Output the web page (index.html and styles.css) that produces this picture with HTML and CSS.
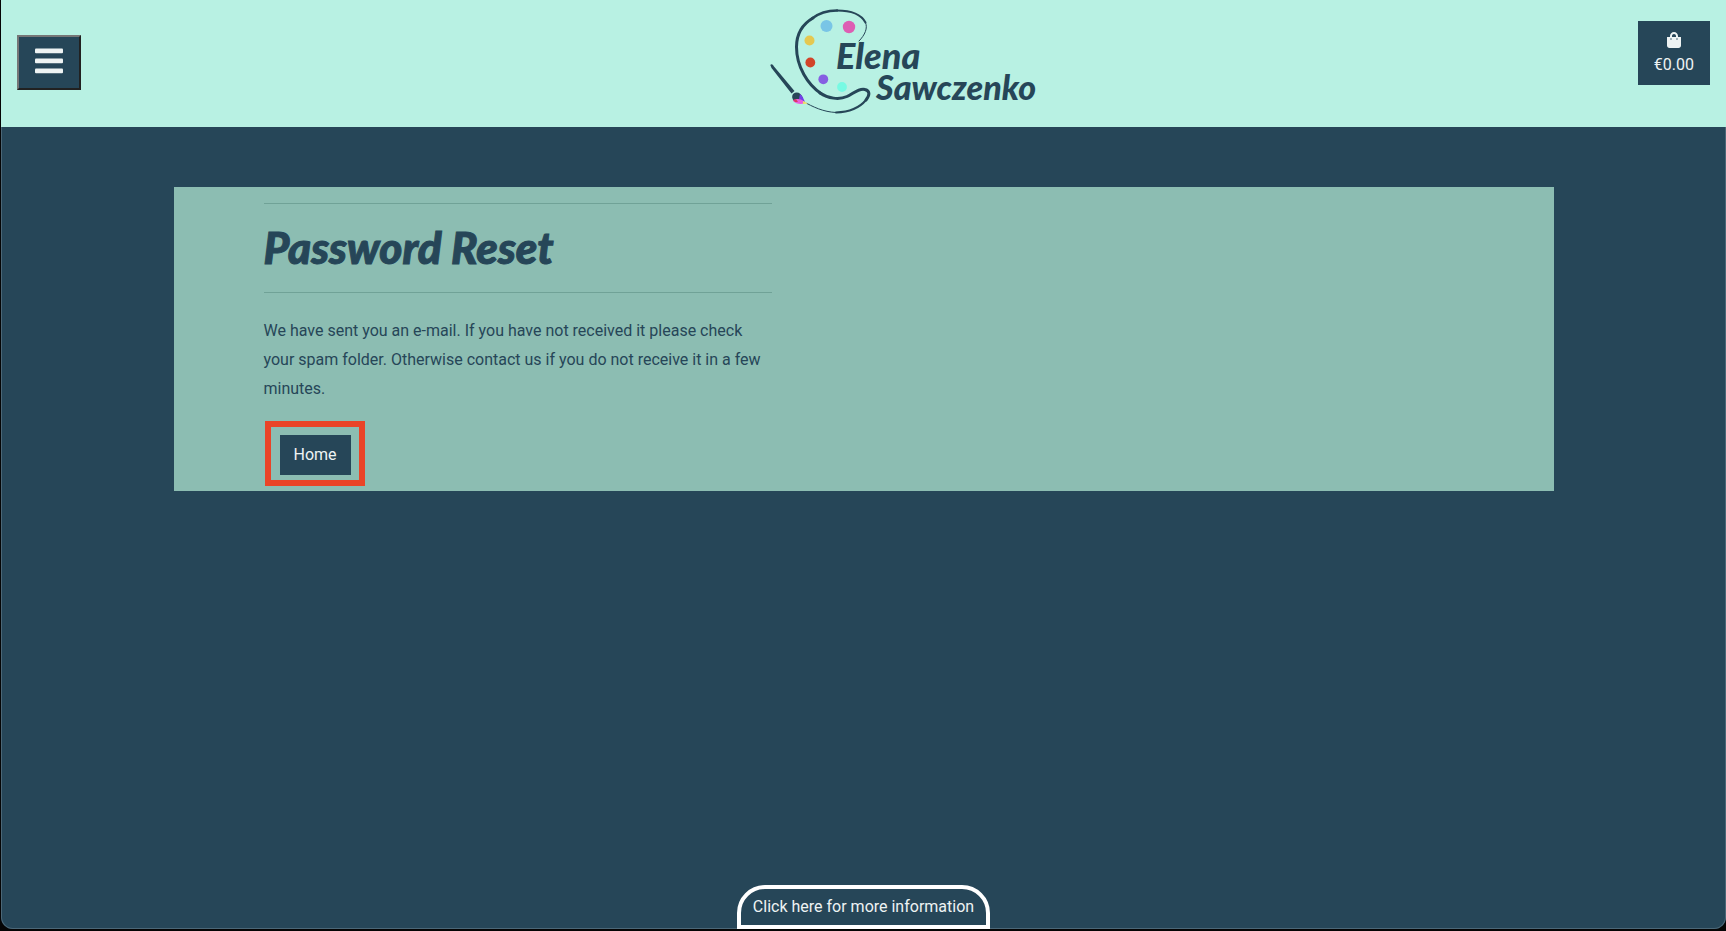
FILE: index.html
```html
<!DOCTYPE html>
<html lang="en">
<head>
<meta charset="utf-8">
<title>Password Reset - Elena Sawczenko</title>
<link rel="stylesheet" href="styles.css">
</head>
<body>
<div class="window">
  <header class="site-header">
    <button class="menu-button" type="button" aria-label="Menu">
      <svg class="menu-icon" viewBox="0 0 28 26" aria-hidden="true">
        <rect x="0" y="0.500" width="28" height="4.700" rx="1"/>
        <rect x="0" y="10.500" width="28" height="4.700" rx="1"/>
        <rect x="0" y="20.500" width="28" height="4.700" rx="1"/>
      </svg>
    </button>
    <a class="logo-link" href="#" aria-label="Elena Sawczenko">
      <svg class="logo" viewBox="-80 0 358 127">
        <path class="stroke thin" d="M99 41 C105 35 108 28 105.500 22.500"/>
        <path class="stroke light" d="M105.500 22.500 C101 14 90 10.500 77 10.500"/>
        <path class="stroke thick" d="M53 18 C41 25 36.500 35 36.500 47 C36.500 67 48 85 61 93.500"/>
        <path class="stroke medium" d="M77 10.500 C67 10.500 59 13 52 18.500"/>
        <path class="stroke thick" d="M60 93 C68 98.500 79 100 87 96.500 C93 94 99 87.500 105 89.500 C110 91 110 95 106 100"/>
        <path class="stroke light" d="M106 100 C101 106 91 112 76 112.500"/>
        <path class="stroke thin" d="M80 112.500 C68 113 57 109 47 103.500"/>
        <circle cx="66.500" cy="26" r="6" fill="#79c5e6"/>
        <circle cx="89" cy="27" r="6.200" fill="#dd5eb3"/>
        <circle cx="49.500" cy="40.500" r="5" fill="#e5c851"/>
        <circle cx="50.300" cy="62.500" r="4.900" fill="#d24429"/>
        <circle cx="63.300" cy="79.300" r="4.900" fill="#865fe2"/>
        <circle cx="82" cy="87" r="4.900" fill="#77fae3"/>
        <path class="handle" d="M10.300 65 C11.500 63.500 13 64.500 13.600 66 L34.500 91 L31.500 93.500 L11.500 68 Z"/>
        <path d="M33 94 C37 91 41 93 43 98 L38 101 L34 101 C32 99 31.500 96 33 94Z" fill="#264658"/>
        <path d="M40 94 C43 96 43.500 99 45 102 L39 99Z" fill="#713fe8"/>
        <path d="M33 101 C35 98.500 39 98.500 42 100 L45 103 C41 105 36 104 33 101Z" fill="#e85fdb"/>
        <path d="M33 100 L36 99 L38 102 L35 102Z" fill="#dd3865"/>
        <path d="M43 101 L48 103.500 L43 104Z" fill="#f1df5f"/>
        <text class="logo-text first" x="76" y="69">Elena</text>
        <text class="logo-text last" x="116" y="100">Sawczenko</text>
      </svg>
    </a>
    <a class="bag" href="#">
      <svg class="bag-icon" viewBox="0 0 448 512" aria-hidden="true">
        <path d="M352 160v-32C352 57.420 294.579 0 224 0S96 57.420 96 128v32H0v272c0 44.183 35.817 80 80 80h288c44.183 0 80-35.817 80-80V160h-96zm-192-32c0-35.290 28.710-64 64-64s64 28.710 64 64v32H160v-32zm160 120c-13.255 0-24-10.745-24-24s10.745-24 24-24 24 10.745 24 24-10.745 24-24 24zm-192 0c-13.255 0-24-10.745-24-24s10.745-24 24-24 24 10.745 24 24-10.745 24-24 24z"/>
      </svg>
      <span>€0.00</span>
    </a>
  </header>
  <main class="page">
    <section class="panel">
      <div class="message">
        <h1 class="title">Password Reset</h1>
        <p class="text">We have sent you an e-mail. If you have not received it please check your spam folder. Otherwise contact us if you do not receive it in a few minutes.</p>
        <div class="highlight"><a class="home" href="#">Home</a></div>
      </div>
    </section>
  </main>
  <button class="info-tab" type="button">Click here for more information</button>
</div>
</body>
</html>
```
FILE: styles.css
```css
* { box-sizing: border-box; }

body {
  margin: 0;
  padding: 0 0 2px 1px;
  min-height: 100vh;
  display: flex;
  background: #050505;
  color: #264658;
  font: 16px/24px Roboto, sans-serif;
}

.window {
  flex: 1;
  display: flex;
  flex-direction: column;
  background: #264658;
  border-radius: 0 0 12px 12px;
  box-shadow: inset 0 0 0 1px #4b6777;
  overflow: hidden;
}

.site-header {
  display: flex;
  justify-content: space-between;
  align-items: flex-start;
  padding: 0 16px;
  background: #b8f1e3;
}

.menu-button {
  margin-top: 35px;
  width: 64px;
  height: 55px;
  padding: 0 0 3px;
  display: flex;
  align-items: center;
  justify-content: center;
  background: #264658;
  border: 2px solid;
  border-color: #767676 #212121 #212121 #767676;
}

.menu-icon { width: 28px; height: 26px; fill: #eef3f3; }

.logo-link, .logo { display: block; }
.logo { width: 358px; height: 127px; overflow: visible; }

.handle { fill: #264658; }
.stroke { fill: none; stroke: #264658; stroke-linecap: round; }
.thick { stroke-width: 3; }
.medium { stroke-width: 2.5; }
.light { stroke-width: 2; }
.thin { stroke-width: 1; }

.logo-text, .title {
  font-family: Lato, sans-serif;
  font-weight: 900;
  font-style: italic;
  -webkit-text-stroke: 1px #264658;
}
.logo-text { fill: #264658; }
.first { font-size: 36px; }
.last { font-size: 34px; }

.bag {
  margin-top: 21px;
  padding: 11px 16px 8px;
  display: flex;
  flex-direction: column;
  align-items: center;
  gap: 5px;
  background: #264658;
  color: #eef3f3;
  text-decoration: none;
}

.bag-icon { width: 14px; height: 16px; fill: currentColor; }

.page { flex: 1; padding: 60px 10%; }

.panel {
  padding: 16px 90px 5px;
  background: #8cbdb2;
}

.message { width: 42.4%; }

.title {
  margin: 0 0 23px;
  padding: 19px 0 21px;
  border: solid #70a297;
  border-width: 1px 0;
  font-size: 44px;
  line-height: 48px;
}

.text { margin: 0 0 18px; line-height: 29px; }

.highlight {
  width: fit-content;
  padding: 8px 8px 5px 9px;
  margin-left: 1px;
  border: 6px solid #ea4427;
}

.home {
  display: block;
  padding: 8px 14px;
  background: #264658;
  color: #eef3f3;
  text-decoration: none;
}

.info-tab {
  align-self: center;
  padding: 6px 12px;
  border: 4px solid #fff;
  border-radius: 28px 28px 0 0;
  background: #264658;
  color: #eef3f3;
  font: 16px/24px Roboto, sans-serif;
}
```
